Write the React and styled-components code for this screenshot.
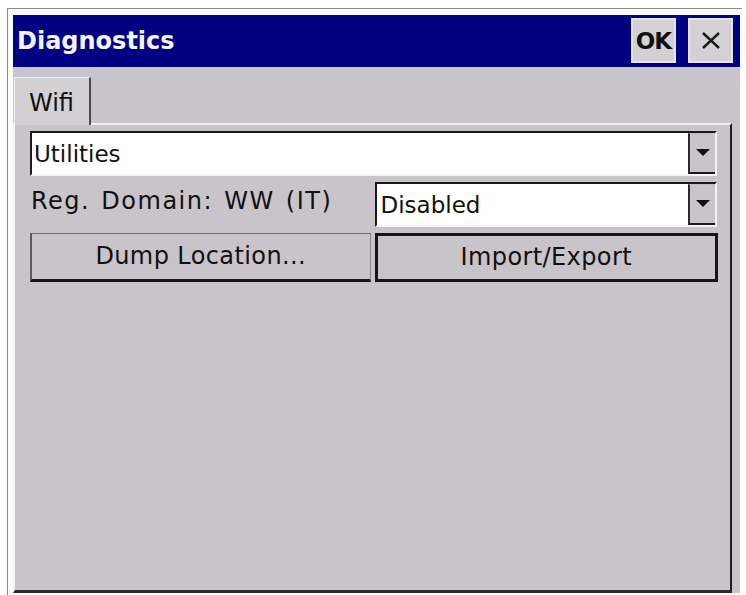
import React from "react";
import styled, { createGlobalStyle } from "styled-components";

const GlobalStyle = createGlobalStyle`
  html, body {
    margin: 0;
    padding: 0;
    background: #ffffff;
  }
  body {
    font-family: "DejaVu Sans", Tahoma, Verdana, sans-serif;
    color: #111;
  }
  * { box-sizing: border-box; }
`;

const Frame = styled.div`
  margin: 8px 4px 0 7px;
  width: 735px;
  height: 587px;
  border-left: 1px solid #8c8c8c;
  border-top: 1px solid #8c8c8c;
  padding: 6px 2px 2px 5px;
  background: #fbfbfb;
`;

const Window = styled.div`
  display: flex;
  flex-direction: column;
  height: 100%;
  background: #c8c4c9;
`;

const TitleBar = styled.div`
  height: 52px;
  flex: none;
  display: flex;
  align-items: center;
  justify-content: space-between;
  background: #010182;
  padding: 0 7px 1px 4px;
`;

const Title = styled.div`
  color: #f4f4ff;
  font-weight: bold;
  font-size: 24px;
`;

const Caps = styled.div`
  display: flex;
  gap: 12px;
`;

const CapButton = styled.div`
  width: 45px;
  height: 45px;
  display: flex;
  align-items: center;
  justify-content: center;
  background: #d4d1d5;
  border: 2px solid #e6e4e7;
  color: #111;
  font-weight: bold;
  font-size: 23px;
  letter-spacing: -1px;
`;

const Client = styled.div`
  flex: 1;
  display: flex;
  flex-direction: column;
  padding-right: 8px;
`;

const TabStrip = styled.div`
  height: 56px;
  flex: none;
  display: flex;
  align-items: flex-end;
  padding-left: 1px;
`;

const Tab = styled.div`
  width: 77px;
  height: 48px;
  display: flex;
  align-items: center;
  padding-left: 14px;
  padding-top: 2px;
  font-size: 24px;
  background: ${(p) => (p.$active ? "#d3d0d4" : "#c8c4c9")};
  border-top: 1px solid #eeeeee;
  border-left: 1px solid #eeeeee;
  border-right: 2px solid #4a4a4a;
  margin-bottom: -2px;
  position: relative;
  z-index: 1;
`;

const Panel = styled.div`
  flex: 1;
  border-top: 2px solid #f2f2f2;
  border-left: 2px solid #f2f2f2;
  border-right: 2px solid #1e1e1e;
  border-bottom: 3px solid #2a2a2a;
  padding: 6px 13px 0 15px;
`;

const Form = styled.div`
  display: grid;
  grid-template-columns: 1fr 1fr;
  grid-template-rows: 45px 45px 49px;
  column-gap: 2px;
  row-gap: 6px;
`;

const Combo = styled.div`
  grid-column: ${(p) => (p.$wide ? "1 / 3" : "auto")};
  display: flex;
  align-items: stretch;
  background: #ffffff;
  border-top: 2px solid #1a1a1a;
  border-left: 2px solid #1a1a1a;
  border-right: 2px solid #f4f4f4;
  border-bottom: 2px solid #f4f4f4;
`;

const ComboText = styled.div`
  flex: 1;
  display: flex;
  align-items: center;
  padding-left: ${(p) => p.$indent}px;
  font-size: 23px;
`;

const DropButton = styled.div`
  width: 27px;
  flex: none;
  display: flex;
  align-items: center;
  justify-content: center;
  background: #c8c4c9;
  border-left: 2px solid #2a2a2a;
  border-bottom: 2px solid #1a1a1a;
  border-top: 1px solid #bdbabd;
`;

const Label = styled.div`
  display: flex;
  align-items: center;
  padding-left: 1px;
  padding-bottom: 8px;
  font-size: 24px;
  letter-spacing: 1.5px;
  word-spacing: 2px;
`;

const Button = styled.div`
  display: flex;
  align-items: center;
  justify-content: center;
  font-size: 24px;
  letter-spacing: 0.4px;
  background: #c8c4c9;
  border-top: ${(p) => (p.$default ? "3px solid #161616" : "1px solid #6e6e6e")};
  border-left: ${(p) => (p.$default ? "3px solid #161616" : "2px solid #5a5a5a")};
  border-right: ${(p) => (p.$default ? "3px solid #161616" : "1px solid #8a8a8a")};
  border-bottom: 3px solid #161616;
  margin-right: ${(p) => (p.$default ? "-1px" : "2px")};
  padding-bottom: 2px;
`;

const Arrow = () => (
  <svg width="14" height="8" viewBox="0 0 14 8">
    <path d="M0 0 H14 L7 7 Z" fill="#111" />
  </svg>
);

const CloseGlyph = () => (
  <svg width="20" height="17" viewBox="0 0 20 17">
    <path d="M2 1 L18 16 M18 1 L2 16" stroke="#1a1a1a" strokeWidth="2.4" fill="none" />
  </svg>
);

export default function App() {
  return (
    <>
      <GlobalStyle />
      <Frame>
        <Window>
          <TitleBar>
            <Title>Diagnostics</Title>
            <Caps>
              <CapButton>OK</CapButton>
              <CapButton>
                <CloseGlyph />
              </CapButton>
            </Caps>
          </TitleBar>
          <Client>
            <TabStrip>
              <Tab $active>Wifi</Tab>
            </TabStrip>
            <Panel>
              <Form>
                <Combo $wide>
                  <ComboText $indent={2}>Utilities</ComboText>
                  <DropButton>
                    <Arrow />
                  </DropButton>
                </Combo>
                <Label>Reg. Domain: WW (IT)</Label>
                <Combo>
                  <ComboText $indent={4}>Disabled</ComboText>
                  <DropButton>
                    <Arrow />
                  </DropButton>
                </Combo>
                <Button>Dump Location...</Button>
                <Button $default>Import/Export</Button>
              </Form>
            </Panel>
          </Client>
        </Window>
      </Frame>
    </>
  );
}
